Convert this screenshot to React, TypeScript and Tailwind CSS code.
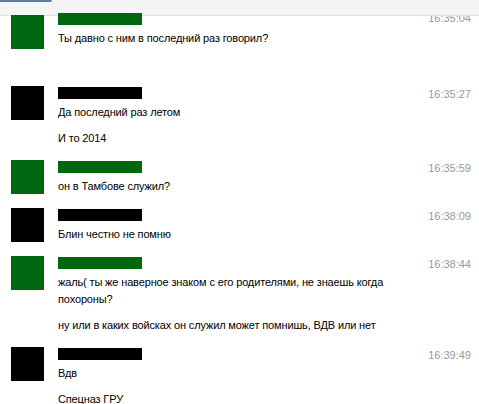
import React from "react";

type Msg = {
  who: "me" | "them";
  time: string;
  lines: string[];
  avatarShift?: string;
  barShift?: string;
};

const messages: Msg[] = [
  {
    who: "me",
    time: "16:35:04",
    lines: ["Ты давно с ним в последний раз говорил?", ""],
    avatarShift: "mt-[5px]",
    barShift: "mt-[3px]",
  },
  { who: "them", time: "16:35:27", lines: ["Да последний раз летом", "И то 2014"] },
  { who: "me", time: "16:35:59", lines: ["он в Тамбове служил?"] },
  { who: "them", time: "16:38:09", lines: ["Блин честно не помню"] },
  {
    who: "me",
    time: "16:38:44",
    lines: [
      "жаль( ты же наверное знаком с его родителями, не знаешь когда похороны?",
      "ну или в каких войсках он служил может помнишь, ВДВ или нет",
    ],
  },
  { who: "them", time: "16:39:49", lines: ["Вдв", "Спецназ ГРУ"] },
];

function Row({ m }: { m: Msg }) {
  const color = m.who === "me" ? "bg-[#006610]" : "bg-black";
  return (
    <div className="flex pl-[11px] pr-[8px]">
      {/* avatar (redacted) */}
      <div className={`w-[33px] h-[34px] shrink-0 relative z-20 ${color} ${m.avatarShift ?? ""}`} />
      <div className="flex-1 ml-[14px] mr-[8px]">
        {/* name (redacted) */}
        <div className="h-[17px]">
          <div className={`w-[84px] h-[12px] relative z-20 ${color} ${m.barShift ?? "mt-[1px]"}`} />
        </div>
        <div className="flex flex-col gap-[9px]">
          {m.lines.map((l, i) => (
            <div key={i} className="leading-[17px] min-h-[17px] text-black tracking-[-0.14px]">
              {l}
            </div>
          ))}
        </div>
      </div>
      <div className="shrink-0 leading-[17px] text-[#999999]">{m.time}</div>
    </div>
  );
}

export default function App() {
  return (
    <div className="relative w-[479px] h-[404px] overflow-hidden bg-white text-[11px] font-['Liberation_Sans',Arial,sans-serif]">
      <div className="absolute top-0 inset-x-0 h-[16px] bg-[#f5f5f5] border-b border-[#dce1e6] z-10">
        <div className="w-[52px] h-[2px] bg-[#5b7ea6] rounded-br-[2px]" />
      </div>
      <div className="flex flex-col gap-[13px] pt-[10px]">
        {messages.map((m, i) => (
          <Row key={i} m={m} />
        ))}
      </div>
    </div>
  );
}
